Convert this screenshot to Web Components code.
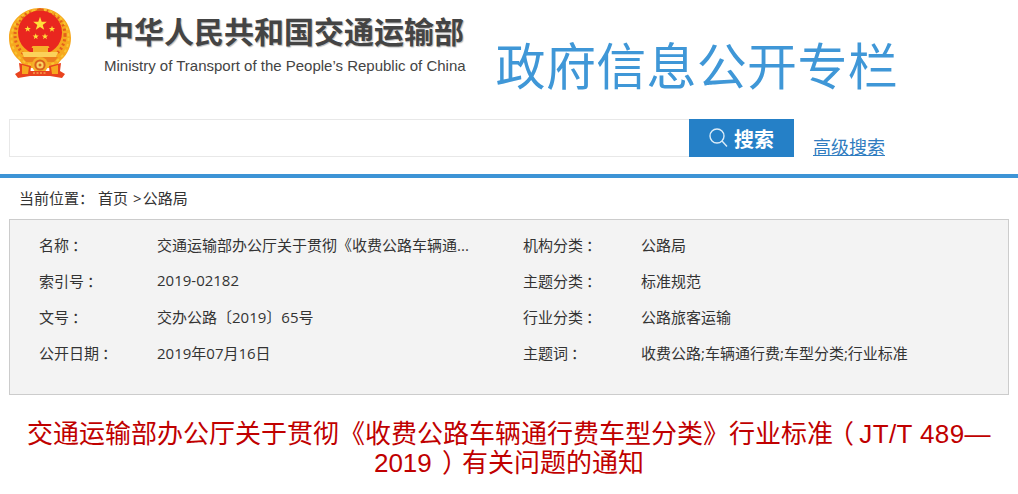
<!DOCTYPE html>
<html lang="zh">
<head>
<meta charset="utf-8">
<title>政府信息公开专栏</title>
<style>
  html, body { margin: 0; background: #fff; }
  body { font-family: "Open Sans", "Noto Sans CJK SC", sans-serif; color: #333; overflow: hidden; }
  /* pull the full-width brackets in, the reference sets them centred in their cell */
  .t5 { letter-spacing: -5px; }
  .t2 { letter-spacing: -2px; }
  .close { margin-left: 3px; letter-spacing: -6px; }
  .wide { letter-spacing: 0.4px; }
</style>
</head>
<body>
<gov-header></gov-header>
<search-bar></search-bar>
<bread-crumb><span>首页</span></bread-crumb>
<info-panel>
  <info-item label="名称" value="交通运输部办公厅关于贯彻《收费公路车辆通..."></info-item>
  <info-item label="机构分类" value="公路局"></info-item>
  <info-item label="索引号" value="2019-02182"></info-item>
  <info-item label="主题分类" value="标准规范"></info-item>
  <info-item label="文号" value="交办公路〔2019〕65号"></info-item>
  <info-item label="行业分类" value="公路旅客运输"></info-item>
  <info-item label="公开日期" value="2019年07月16日"></info-item>
  <info-item label="主题词" value="收费公路;车辆通行费;车型分类;行业标准"></info-item>
</info-panel>
<article-title>交通运输部办公厅关于贯彻《收费公路车辆通行费车型分类》行业标<span class="t5">准</span><span class="t2">（</span> <span class="wide">JT/T 489—</span>2019 <span class="close">）</span>有关问题的通知</article-title>

<script>
// header: emblem, ministry name and the blue column title
class GovHeader extends HTMLElement {
    constructor() {
        super();
        this.attachShadow({ mode: 'open' });
    }

    connectedCallback() {
        const star = (x, y, r) => {
            const pts = [];
            for (let i = 0; i < 10; i++) {
                const a = -Math.PI / 2 + i * Math.PI / 5;
                const rr = i % 2 ? r * 0.4 : r;
                pts.push((x + rr * Math.cos(a)).toFixed(1) + ',' + (y + rr * Math.sin(a)).toFixed(1));
            }
            return `<polygon points="${pts.join(' ')}" fill="#ffe03a"/>`;
        };
        this.shadowRoot.innerHTML = `
            <style>
                :host { display: block; }
                .top { display: flex; height: 119px; box-sizing: border-box; padding: 8px 0 0 9px; }
                svg { width: 64px; height: 70px; flex: none; }
                .name { margin-left: 31px; padding-top: 4px; color: #444; flex: none; }
                .cn { font-family: "Noto Sans CJK SC", sans-serif; font-size: 30px; line-height: 36px; font-weight: 700; white-space: nowrap; text-shadow: 1px 1px 1px #bbb; }
                .en { font-family: "Liberation Sans", sans-serif; font-size: 15px; line-height: 18px; margin-top: 9px; white-space: nowrap; }
                .col { margin-left: 30px; padding-top: 22px; font-family: "Noto Sans CJK SC", sans-serif; font-size: 50px; letter-spacing: 0.3px; line-height: 66px; color: #3f97d7; white-space: nowrap; }
            </style>
            <div class="top">
            <svg viewBox="0 0 64 70">
                <!-- wheat ring -->
                <path d="M10 52 C3 46 0 38 0 30 C0 13 14 0 31 0 C48 0 62 13 62 30 C62 38 59 46 52 52 L46 60 L16 60 Z" fill="#f6a81f"/>
                <circle cx="31" cy="27" r="25" fill="none" stroke="#e4601c" stroke-width="3" stroke-dasharray="2 2.4"/>
                <circle cx="31" cy="30" r="28.5" fill="none" stroke="#f9c531" stroke-width="2" stroke-dasharray="3 3"/>
                <circle cx="31" cy="24.5" r="22" fill="#e9261f"/>
                <path d="M28.5 1 L31 0 L33.5 1 L35 3 L27 3 Z" fill="#e4601c"/>
                ${star(31, 16, 7.2)}${star(18.7, 21, 3.3)}${star(26.7, 28.5, 3.3)}${star(36, 28.5, 3.3)}${star(43, 21, 3.3)}
                <!-- gate -->
                <path d="M23.5 38 L39.5 38 L40.5 40 L39 40 L39 44 L24 44 L24 40 L22.5 40 Z" fill="#f5b02a"/>
                <path d="M13 44 L49 44 L47 49 L15 49 Z" fill="#fbd25a"/>
                <path d="M13 49 L49 49 L45 54 L17 54 Z" fill="#ec7f1e"/>
                <!-- gear -->
                <circle cx="31" cy="57" r="8" fill="#f5b02a"/>
                <circle cx="31" cy="57" r="5.6" fill="#d9601c"/>
                <circle cx="31" cy="57" r="3.6" fill="#f9d262"/>
                <circle cx="31" cy="57" r="1.5" fill="#d9601c"/>
                <!-- ribbons -->
                <path d="M10 55 L22 58 L21 68 L9 70 L6 66 L11 63 Z M52 55 L40 58 L41 68 L53 70 L56 66 L51 63 Z" fill="#e9431e"/>
                <path d="M13 57 L20 59 L19 66 L13 66 Z M49 57 L42 59 L43 66 L49 66 Z" fill="#f6a81f"/>
                <path d="M21 63 L41 63 L41 68 L21 68 Z" fill="#e9431e"/>
                <path d="M24 65 L38 65" stroke="#f9d262" stroke-width="1" stroke-dasharray="2 1.5"/>
            </svg>
            <div class="name">
                <div class="cn">中华人民共和国交通运输部</div>
                <div class="en">Ministry of Transport of the People’s Republic of China</div>
            </div>
            <div class="col">政府信息公开专栏</div>
            </div>
        `;
    }
}

class SearchBar extends HTMLElement {
    constructor() {
        super();
        this.attachShadow({ mode: 'open' });
    }

    connectedCallback() {
        this.shadowRoot.innerHTML = `
            <style>
                :host { display: block; }
                .row { display: flex; align-items: flex-start; padding-left: 9px; height: 55px; font-family: "Noto Sans CJK SC", sans-serif; }
                .field { width: 680px; height: 38px; box-sizing: border-box; border: 1px solid #e8e8e8; border-right: 0; }
                .btn { width: 105px; height: 38px; display: flex; align-items: center; justify-content: center; gap: 5px; background: #2580c7; color: #fff; font-size: 20px; font-weight: 700; }
                svg { width: 20px; height: 20px; }
                a { margin: 16px 0 0 19px; font-size: 18px; line-height: 22px; color: #2f7cc0; text-decoration: underline; }
            </style>
            <div class="row">
                <div class="field"></div>
                <div class="btn">
                    <svg viewBox="0 0 20 20" fill="none" stroke="#dcecf8" stroke-width="1.4"><circle cx="8" cy="8" r="7"/><path d="M13 13 L18 18.5"/></svg>
                    <span>搜索</span>
                </div>
                <a href="#">高级搜索</a>
            </div>
        `;
    }
}

class BreadCrumb extends HTMLElement {
    constructor() {
        super();
        this.attachShadow({ mode: 'open' });
    }

    connectedCallback() {
        this.shadowRoot.innerHTML = `
            <style>
                :host { display: block; border-top: 4px solid #3d94d6; }
                .crumb { display: flex; box-sizing: border-box; padding: 0 0 3px 19px; height: 41px; align-items: center; font-size: 15px; color: #333; white-space: nowrap; }
                .colon { font-family: "Noto Sans CJK TC", sans-serif; }
                .home { margin-left: 4px; }
                .sep { margin-left: 5px; }
                .gt { margin-right: 1px; }
            </style>
            <div class="crumb">
                <span>当前位置<span class="colon">：</span></span>
                <span class="home"><slot></slot></span>
                <span class="sep"><span class="gt">&gt;</span>公路局</span>
            </div>
        `;
    }
}

class InfoPanel extends HTMLElement {
    constructor() {
        super();
        this.attachShadow({ mode: 'open' });
    }

    connectedCallback() {
        this.shadowRoot.innerHTML = `
            <style>
                :host { display: block; margin: 0 9px; }
                .box { display: grid; grid-template-columns: 484px 1fr; grid-auto-rows: 36px; box-sizing: border-box; height: 176px; padding: 6px 0 0 29px; background: #f3f3f3; border: 1px solid #ccc; }
            </style>
            <div class="box"><slot></slot></div>
        `;
    }
}

class InfoItem extends HTMLElement {
    constructor() {
        super();
        this.attachShadow({ mode: 'open' });
    }

    connectedCallback() {
        this.shadowRoot.innerHTML = `
            <style>
                :host { display: flex; align-items: center; font-size: 15px; color: #333; white-space: nowrap; }
                .label { width: 118px; flex: none; }
                .colon { font-family: "Noto Sans CJK TC", sans-serif; padding-left: 3px; }
            </style>
            <span class="label">${this.getAttribute('label')}<span class="colon">：</span></span>
            <span>${this.getAttribute('value')}</span>
        `;
    }
}

class ArticleTitle extends HTMLElement {
    constructor() {
        super();
        this.attachShadow({ mode: 'open' });
    }

    connectedCallback() {
        this.shadowRoot.innerHTML = `
            <style>
                :host { display: block; margin-top: 25px; padding: 0 26px; text-align: center; font-family: "Liberation Sans", "Noto Sans CJK SC", sans-serif; font-size: 26px; line-height: 29px; color: #c00000; }
            </style>
            <slot></slot>
        `;
    }
}

customElements.define('gov-header', GovHeader);
customElements.define('search-bar', SearchBar);
customElements.define('bread-crumb', BreadCrumb);
customElements.define('info-panel', InfoPanel);
customElements.define('info-item', InfoItem);
customElements.define('article-title', ArticleTitle);
</script>
</body>
</html>
